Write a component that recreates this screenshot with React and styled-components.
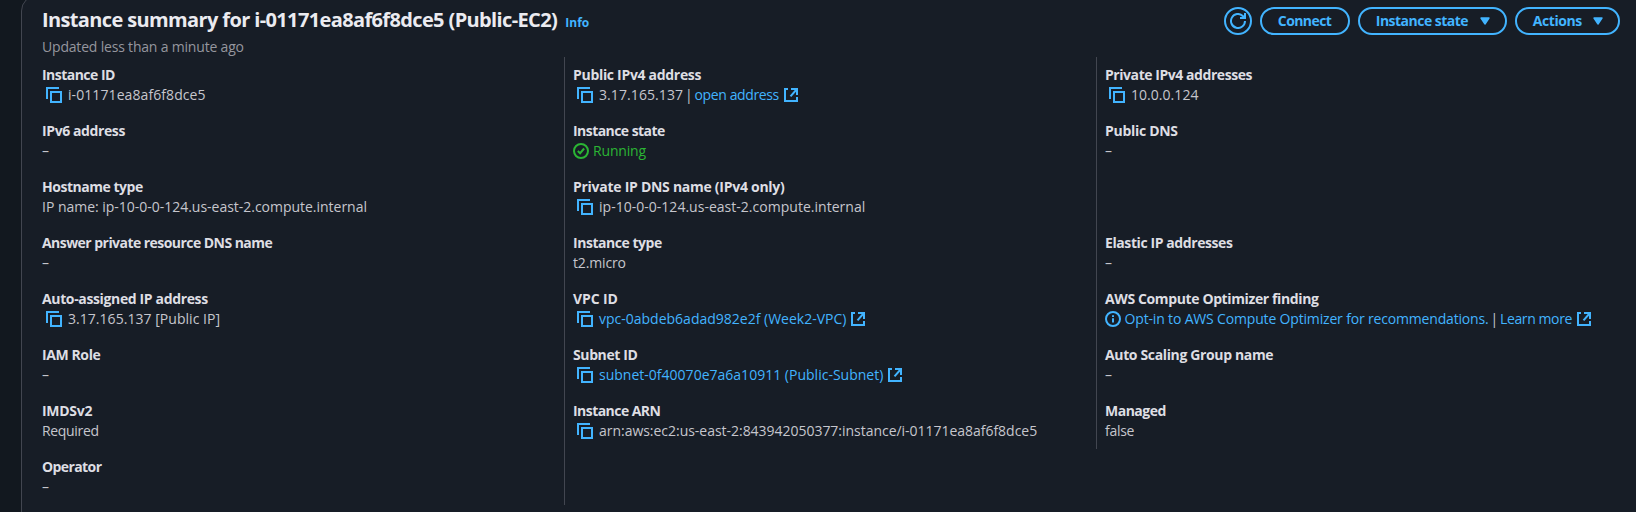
import React from 'react';
import styled, { createGlobalStyle } from 'styled-components';

const color = {
  page: '#12181f',
  panel: '#171d26',
  border: '#424650',
  heading: '#ebebf0',
  label: '#dedee3',
  text: '#c6c6cd',
  muted: '#95969e',
  link: '#42b4ff',
  success: '#2bb534',
};

const GlobalStyle = createGlobalStyle`
  * { box-sizing: border-box; }
  html, body { margin: 0; background: ${color.page}; overflow: hidden; }
  body { font: 400 14px/20px "Open Sans", "Noto Sans", sans-serif; color: ${color.text}; }
`;

const Page = styled.main`
  display: flex;
  height: 512px;
  padding-left: 21px;
  overflow: hidden;
`;

const Panel = styled.section`
  flex: none;
  width: 1640px;
  height: 540px;
  margin-top: -5px;
  padding: 11px 24px 0 20px;
  background: ${color.panel};
  border: 1px solid ${color.border};
  border-radius: 16px;
`;

const Header = styled.header`
  display: flex;
  justify-content: space-between;
  width: 1578px;
  height: 50px;
`;

const TitleRow = styled.div`
  display: flex;
  align-items: baseline;
  height: 30px;
  padding-top: 1px;
  white-space: nowrap;
`;

const Title = styled.h1`
  margin: 0;
  font-size: 20px;
  line-height: 24px;
  font-weight: 700;
  letter-spacing: -0.629px;
  color: ${color.heading};
`;

const InfoLink = styled.a`
  margin-left: 8.2px;
  font-size: 12px;
  font-weight: 700;
  color: ${color.link};
`;

const Updated = styled.div`
  letter-spacing: -0.19px;
  color: ${color.muted};
`;

const Actions = styled.div`
  display: flex;
  gap: 8px;
  height: 28px;
`;

const Button = styled.button`
  display: flex;
  align-items: center;
  justify-content: space-between;
  width: ${(p) => p.$width}px;
  height: 28px;
  padding: ${(p) => (p.$round ? '0 4px' : '0 15px 0 15.8px')};
  background: transparent;
  border: 2px solid ${color.link};
  border-radius: 14px;
  color: ${color.link};
  font: inherit;
  font-weight: 700;
  letter-spacing: ${(p) => p.$ls || 0}px;
  white-space: nowrap;
`;

const Columns = styled.div`
  display: grid;
  grid-template-columns: 523px 532px 1fr;
  align-items: start;
`;

const Column = styled.dl`
  display: flex;
  flex-direction: column;
  gap: 16px;
  margin: 0;
  padding: 8px 0 8px ${(p) => p.$indent}px;
  border-right: ${(p) => (p.$divided ? `1px solid ${color.border}` : 'none')};
`;

const Field = styled.div`
  height: 40px;
  white-space: nowrap;
`;

const Label = styled.dt`
  font-weight: 700;
  letter-spacing: ${(p) => p.$ls}px;
  color: ${color.label};
`;

const Value = styled.dd`
  display: flex;
  align-items: center;
  height: 20px;
  margin: 0;
`;

const Text = styled.span`
  letter-spacing: ${(p) => p.$ls || 0}px;
`;

const Link = styled.a`
  letter-spacing: ${(p) => p.$ls || 0}px;
  color: ${color.link};
`;

const Status = styled.span`
  letter-spacing: -0.17px;
  color: ${color.success};
`;

const Pipe = styled.span`
  width: 11.5px;
  text-align: center;
`;

const Icon = styled.svg`
  flex: none;
  display: block;
  fill: none;
  stroke: ${(p) => p.$stroke || color.link};
  stroke-width: 2;
  margin: 0 ${(p) => p.$after || 0}px 0 ${(p) => p.$before || 0}px;
`;

const CopyIcon = () => (
  <Icon width="16" height="16" viewBox="0 0 16 16" $before={4} $after={6}>
    <path d="M13 1H1v11" />
    <path d="M5 5h10v10H5z" />
  </Icon>
);

const ExternalIcon = () => (
  <Icon width="14" height="14" viewBox="0 0 14 14" $before={5}>
    <path d="M4 1H1v12h12V9" />
    <path d="M7 1h6v6M13 1L6.5 8.3" />
  </Icon>
);

const CheckIcon = () => (
  <Icon width="16" height="16" viewBox="0 0 16 16" $stroke={color.success} $after={4}>
    <circle cx="8" cy="8" r="7" />
    <path d="M4.8 8l2.3 2.2 4-4.7" />
  </Icon>
);

const InfoIcon = () => (
  <Icon width="16" height="16" viewBox="0 0 16 16" $after={3.6}>
    <circle cx="8" cy="8" r="7" />
    <path d="M8 7.2v4.3M8 4.3v1.8" />
  </Icon>
);

const RefreshIcon = () => (
  <Icon width="16" height="16" viewBox="0 0 16 16">
    <path d="M15 8a7 7 0 1 1-2.2-5.1L15 5" />
    <path d="M15 0v5h-5" />
  </Icon>
);

const Caret = () => (
  <Icon width="10" height="8" viewBox="0 0 10 8">
    <path
      d="M1 1h8L5 7z"
      fill={color.link}
      strokeWidth="1.4"
      strokeLinejoin="round"
    />
  </Icon>
);

const Copyable = ({ ls, children }) => (
  <>
    <CopyIcon />
    <Text $ls={ls}>{children}</Text>
  </>
);

const columns = [
  [
    ['Instance ID', -0.527, <Copyable ls={0.081}>i-01171ea8af6f8dce5</Copyable>],
    ['IPv6 address', -0.4, '–'],
    ['Hostname type', -0.469, <Text $ls={-0.02}>IP name: ip-10-0-0-124.us-east-2.compute.internal</Text>],
    ['Answer private resource DNS name', -0.545, '–'],
    ['Auto-assigned IP address', -0.36, <Copyable ls={0.04}>3.17.165.137 [Public IP]</Copyable>],
    ['IAM Role', -0.4, '–'],
    ['IMDSv2', -0.275, <Text $ls={-0.33}>Required</Text>],
    ['Operator', -0.6, '–'],
  ],
  [
    ['Public IPv4 address', -0.307, <>
      <Copyable ls={0.084}>3.17.165.137</Copyable>
      <Pipe>|</Pipe>
      <Link $ls={-0.4}>open address</Link>
      <ExternalIcon />
    </>],
    ['Instance state', -0.554, <><CheckIcon /><Status>Running</Status></>],
    ['Private IP DNS name (IPv4 only)', -0.272, <Copyable ls={0.02}>ip-10-0-0-124.us-east-2.compute.internal</Copyable>],
    ['Instance type', -0.461, <Text $ls={-0.157}>t2.micro</Text>],
    ['VPC ID', -0.116, <>
      <CopyIcon />
      <Link $ls={0}>vpc-0abdeb6adad982e2f (Week2-VPC)</Link>
      <ExternalIcon />
    </>],
    ['Subnet ID', -0.387, <>
      <CopyIcon />
      <Link $ls={0.01}>subnet-0f40070e7a6a10911 (Public-Subnet)</Link>
      <ExternalIcon />
    </>],
    ['Instance ARN', -0.549, <Copyable ls={-0.028}>arn:aws:ec2:us-east-2:843942050377:instance/i-01171ea8af6f8dce5</Copyable>],
  ],
  [
    ['Private IPv4 addresses', -0.443, <Copyable ls={0.04}>10.0.0.124</Copyable>],
    ['Public DNS', -0.29, '–'],
    null,
    ['Elastic IP addresses', -0.41, '–'],
    ['AWS Compute Optimizer finding', -0.379, <>
      <InfoIcon />
      <Link $ls={-0.169}>Opt-in to AWS Compute Optimizer for recommendations.</Link>
      <Pipe>|</Pipe>
      <Link $ls={-0.4}>Learn more</Link>
      <ExternalIcon />
    </>],
    ['Auto Scaling Group name', -0.357, '–'],
    ['Managed', -0.5, <Text $ls={-0.275}>false</Text>],
  ],
];

const indents = [0, 8, 8];

export default function App() {
  return (
    <Page>
      <GlobalStyle />
      <Panel>
        <Header>
          <div>
            <TitleRow>
              <Title>Instance summary for i-01171ea8af6f8dce5 (Public-EC2)</Title>
              <InfoLink>Info</InfoLink>
            </TitleRow>
            <Updated>Updated less than a minute ago</Updated>
          </div>
          <Actions>
            <Button $width={28} $round aria-label="Refresh"><RefreshIcon /></Button>
            <Button $width={90} $ls={-0.577}>Connect</Button>
            <Button $width={149} $ls={-0.516}>Instance state<Caret /></Button>
            <Button $width={105} $ls={-0.429}>Actions<Caret /></Button>
          </Actions>
        </Header>
        <Columns>
          {columns.map((fields, i) => (
            <Column key={i} $indent={indents[i]} $divided={i < 2}>
              {fields.map((field, j) => (
                <Field key={j}>
                  {field && (
                    <>
                      <Label $ls={field[1]}>{field[0]}</Label>
                      <Value>{field[2]}</Value>
                    </>
                  )}
                </Field>
              ))}
            </Column>
          ))}
        </Columns>
      </Panel>
    </Page>
  );
}
